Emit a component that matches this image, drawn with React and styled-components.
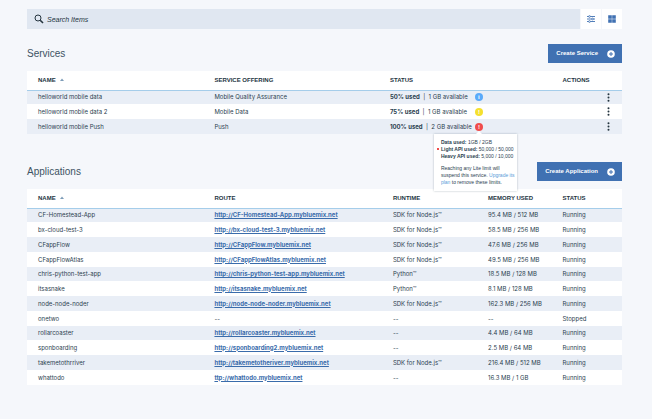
import React, { useState } from "react";
import styled, { createGlobalStyle } from "styled-components";

const GlobalStyle = createGlobalStyle`
  *, *::before, *::after {
    box-sizing: border-box;
  }

  body {
    margin: 0;
    background: #f5f7fb;
    color: #2b4150;
    font-family: "Liberation Sans", Arial, sans-serif;
    font-size: 6px;
    line-height: 8px;
  }

  button, input {
    font: inherit;
    color: inherit;
    margin: 0;
    padding: 0;
    border: 0;
    background: none;
  }

  button {
    cursor: pointer;
  }
`;

const Page = styled.main`
  padding: 9px 30px 34px 27px;
`;

const Toolbar = styled.div`
  display: flex;
  gap: 1px;
  height: 20px;
`;

const SearchBox = styled.label`
  flex: 1;
  display: flex;
  align-items: center;
  gap: 3px;
  padding-left: 7px;
  background: #e0e7f1;
`;

const SearchInput = styled.input`
  flex: 1;
  min-width: 0;
  height: 20px;
  font-size: 7px;
  font-style: italic;
  outline: none;

  &::placeholder {
    color: #24343f;
    opacity: 1;
  }
`;

const ToolButton = styled.button`
  width: 20px;
  display: flex;
  align-items: center;
  justify-content: center;
  background: #fff;
  color: #4071b2;
`;

const SectionHead = styled.header`
  display: flex;
  align-items: center;
  justify-content: space-between;
  height: 19px;
  margin: ${({ $top }) => $top}px 0 8px;
`;

const Title = styled.h2`
  margin: 0;
  color: #3d5363;
  font-size: 10px;
  font-weight: 400;
  line-height: 14px;
`;

const CreateButton = styled.button`
  display: flex;
  align-items: center;
  gap: 9px;
  height: 19px;
  padding: 0 7px 0 8px;
  background: #4071b2;
  color: #fff;
  font-weight: 700;
`;

const CreateLabel = styled.span`
  padding-bottom: 2px;
`;

const Table = styled.table`
  width: 100%;
  table-layout: fixed;
  border-collapse: collapse;
  background: #fff;
`;

const Th = styled.th`
  width: ${({ $width }) => $width || "auto"};
  height: 19px;
  padding: 0;
  border-bottom: 1px solid #a5cdea;
  color: #24343f;
  font-weight: 700;
  text-align: left;

  &:first-child {
    padding-left: 11px;
  }
`;

const SortArrow = styled.svg`
  margin-left: 4px;
  vertical-align: 1px;
`;

const Row = styled.tr`
  height: 15px;

  &:nth-child(4n + 1) {
    height: 14px;
  }

  &:nth-child(odd) {
    background: #e9eef6;
  }
`;

const Td = styled.td`
  padding: 0;
  font-family: Inter, "Liberation Sans", sans-serif;
  white-space: nowrap;

  &:first-child {
    padding-left: 11px;
  }
`;

const RouteLink = styled.a`
  color: #3a6cab;
  font-weight: 700;
  text-decoration: underline;
`;

const Usage = styled.div`
  display: flex;
  align-items: center;
  justify-content: space-between;
  width: 93px;
`;

const Dot = styled.span`
  position: relative;
  width: 8px;
  height: 8px;
  border-radius: 50%;
  background: ${({ $color }) => $color};
  color: #fff;
  font-family: "Liberation Sans", Arial, sans-serif;
  font-weight: 700;
  text-align: center;
`;

const Tooltip = styled.div`
  position: absolute;
  z-index: 1;
  top: 11px;
  left: -41px;
  width: 83px;
  padding: 5px 0 5px 3px;
  background: #fff;
  box-shadow: 0 0 2px rgba(43, 65, 80, 0.35);
  color: #2b4150;
  font-size: 5px;
  font-weight: 400;
  line-height: 7px;
  text-align: left;

  &::before {
    content: "";
    position: absolute;
    top: -3px;
    left: 42px;
    border: 3px solid transparent;
    border-top: 0;
    border-bottom-color: #fff;
  }
`;

const LimitLine = styled.div`
  display: flex;
  align-items: center;
  gap: 2px;

  &::before {
    content: "";
    width: 2px;
    height: 2px;
    background: ${({ $over }) => ($over ? "#f04c4c" : "transparent")};
  }
`;

const TooltipText = styled.p`
  margin: 5px 0 0 4px;

  a {
    color: #5a9bd8;
    text-decoration: none;
  }
`;

const MenuButton = styled.button`
  display: flex;
  margin-left: auto;
  padding: 0 12px;
`;

const services = [
  { name: "helloworld mobile data", offering: "Mobile Quality Assurance", used: "50%", free: "1 GB", color: "#5aaafa", mark: "i" },
  { name: "helloworld mobile data 2", offering: "Mobile Data", used: "75%", free: "1 GB", color: "#f5e02e", mark: "!" },
  { name: "helloworld mobile Push", offering: "Push", used: "100%", free: "2 GB", color: "#f04c4c", mark: "!", over: true },
];

const limits = [
  { label: "Data used:", value: "1GB / 2GB" },
  { label: "Light API used:", value: "50,000 / 50,000", over: true },
  { label: "Heavy API used:", value: "5,000 / 10,000" },
];

const NODE = "SDK for Node.js™";
const PYTHON = "Python™";

const applications = [
  { name: "CF-Homestead-App", route: "http://CF-Homestead-App.mybluemix.net", runtime: NODE, memory: "95.4 MB / 512 MB", status: "Running" },
  { name: "bx-cloud-test-3", route: "http://bx-cloud-test-3.mybluemix.net", runtime: NODE, memory: "58.5 MB / 256 MB", status: "Running" },
  { name: "CFappFlow", route: "http://CFappFlow.mybluemix.net", runtime: NODE, memory: "47.6 MB / 256 MB", status: "Running" },
  { name: "CFappFlowAtlas", route: "http://CFappFlowAtlas.mybluemix.net", runtime: NODE, memory: "49.5 MB / 256 MB", status: "Running" },
  { name: "chris-python-test-app", route: "http://chris-python-test-app.mybluemix.net", runtime: PYTHON, memory: "18.5 MB / 128 MB", status: "Running" },
  { name: "itsasnake", route: "http://itsasnake.mybluemix.net", runtime: PYTHON, memory: "8.1 MB / 128 MB", status: "Running" },
  { name: "node-node-noder", route: "http://node-node-noder.mybluemix.net", runtime: NODE, memory: "162.3 MB / 256 MB", status: "Running" },
  { name: "onetwo", status: "Stopped" },
  { name: "rollarcoaster", route: "http://rollarcoaster.mybluemix.net", memory: "4.4 MB / 64 MB", status: "Running" },
  { name: "sponboarding", route: "http://sponboarding2.mybluemix.net", memory: "2.5 MB / 64 MB", status: "Running" },
  { name: "takemetothrriver", route: "http://takemetotheriver.mybluemix.net", runtime: NODE, memory: "216.4 MB / 512 MB", status: "Running" },
  { name: "whattodo", route: "ttp://whattodo.mybluemix.net", memory: "16.3 MB / 1 GB", status: "Running" },
];

const SearchIcon = () => (
  <svg width="10" height="10" viewBox="0 0 10 10" fill="none" stroke="#24343f">
    <circle cx="4" cy="4" r="3" strokeWidth="1" />
    <path d="M6.2 6.2 9 9" strokeWidth="1.6" />
  </svg>
);

const FilterIcon = () => (
  <svg width="8" height="8" viewBox="0 0 8 8" fill="none" stroke="currentColor">
    <path d="M0 1.5h8M0 4h8M0 6.5h8" strokeWidth="0.9" />
    <g fill="#fff" strokeWidth="0.8">
      <circle cx="2.5" cy="1.5" r="0.9" />
      <circle cx="5.5" cy="4" r="0.9" />
      <circle cx="2.5" cy="6.5" r="0.9" />
    </g>
  </svg>
);

const GridIcon = () => (
  <svg width="8" height="8" viewBox="0 0 8 8" fill="currentColor">
    <path d="M0.2 0.2h3.6v3.6H0.2zM4.2 0.2h3.6v3.6H4.2zM0.2 4.2h3.6v3.6H0.2zM4.2 4.2h3.6v3.6H4.2z" />
  </svg>
);

const PlusIcon = () => (
  <svg width="8" height="8" viewBox="0 0 8 8">
    <circle cx="4" cy="4" r="3.8" fill="#fff" />
    <path d="M4 2v4M2 4h4" stroke="#4071b2" strokeWidth="1" />
  </svg>
);

const MoreIcon = () => (
  <svg width="3" height="9" viewBox="0 0 3 9" fill="#24343f">
    <circle cx="1.5" cy="1.2" r="1" />
    <circle cx="1.5" cy="4.5" r="1" />
    <circle cx="1.5" cy="7.8" r="1" />
  </svg>
);

const NameHeader = () => (
  <Th $width="31.5%" aria-sort="ascending">
    NAME
    <SortArrow width="4" height="3" viewBox="0 0 4 3">
      <path d="M0 3 2 0.5 4 3z" fill="#7d9cb8" />
    </SortArrow>
  </Th>
);

const LimitsTooltip = () => (
  <Tooltip role="tooltip">
    {limits.map((limit) => (
      <LimitLine key={limit.label} $over={limit.over}>
        <span>
          <b>{limit.label}</b> {limit.value}
        </span>
      </LimitLine>
    ))}
    <TooltipText>
      Reaching any Lite limit will
      <br />
      suspend this service. <a href="#upgrade">Upgrade its
      <br />
      plan</a> to remove these limits.
    </TooltipText>
  </Tooltip>
);

const App = () => {
  const [search, setSearch] = useState("");

  return (
    <Page>
      <GlobalStyle />
      <Toolbar>
        <SearchBox>
          <SearchIcon />
          <SearchInput
            type="text"
            aria-label="Search Items"
            placeholder="Search Items"
            value={search}
            onChange={(e) => setSearch(e.target.value)}
          />
        </SearchBox>
        <ToolButton aria-label="Filter">
          <FilterIcon />
        </ToolButton>
        <ToolButton aria-label="Grid view">
          <GridIcon />
        </ToolButton>
      </Toolbar>

      <SectionHead $top={15}>
        <Title>Services</Title>
        <CreateButton>
          <CreateLabel>Create Service</CreateLabel>
          <PlusIcon />
        </CreateButton>
      </SectionHead>
      <Table>
        <thead>
          <tr>
            <NameHeader />
            <Th $width="29.5%">SERVICE OFFERING</Th>
            <Th $width="29%">STATUS</Th>
            <Th>ACTIONS</Th>
          </tr>
        </thead>
        <tbody>
          {services.map((service) => (
            <Row key={service.name}>
              <Td>{service.name}</Td>
              <Td>{service.offering}</Td>
              <Td>
                <Usage>
                  <span>
                    <b>{service.used} used</b> &nbsp;|&nbsp; {service.free} available
                  </span>
                  <Dot $color={service.color}>
                    {service.mark}
                    {service.over && <LimitsTooltip />}
                  </Dot>
                </Usage>
              </Td>
              <Td>
                <MenuButton aria-label={`Actions for ${service.name}`}>
                  <MoreIcon />
                </MenuButton>
              </Td>
            </Row>
          ))}
        </tbody>
      </Table>

      <SectionHead $top={28}>
        <Title>Applications</Title>
        <CreateButton>
          <CreateLabel>Create Application</CreateLabel>
          <PlusIcon />
        </CreateButton>
      </SectionHead>
      <Table>
        <thead>
          <tr>
            <NameHeader />
            <Th $width="30%">ROUTE</Th>
            <Th $width="16%">RUNTIME</Th>
            <Th $width="12.5%">MEMORY USED</Th>
            <Th>STATUS</Th>
          </tr>
        </thead>
        <tbody>
          {applications.map((app) => (
            <Row key={app.name}>
              <Td>{app.name}</Td>
              <Td>{app.route ? <RouteLink href={app.route}>{app.route}</RouteLink> : "--"}</Td>
              <Td>{app.runtime || "--"}</Td>
              <Td>{app.memory || "--"}</Td>
              <Td>{app.status}</Td>
            </Row>
          ))}
        </tbody>
      </Table>
    </Page>
  );
};

export default App;
